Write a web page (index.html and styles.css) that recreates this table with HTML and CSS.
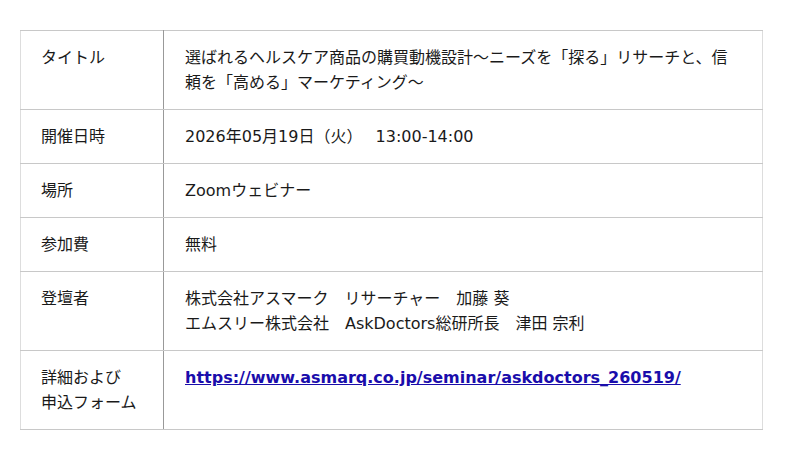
FILE: index.html
```html
<!DOCTYPE html>
<html lang="ja">
<head>
<meta charset="utf-8">
<link rel="stylesheet" href="styles.css">
</head>
<body>
<table class="info">
  <tr>
    <th>タイトル</th>
    <td>選ばれるヘルスケア商品の購買動機設計～ニーズを「探る」リサーチと、信頼を「高める」マーケティング～</td>
  </tr>
  <tr>
    <th>開催日時</th>
    <td>2026年05月19日（火）　 13:00-14:00</td>
  </tr>
  <tr>
    <th>場所</th>
    <td>Zoomウェビナー</td>
  </tr>
  <tr>
    <th>参加費</th>
    <td>無料</td>
  </tr>
  <tr>
    <th>登壇者</th>
    <td>株式会社アスマーク　リサーチャー　加藤 葵<br>エムスリー株式会社　AskDoctors総研所長　津田 宗利</td>
  </tr>
  <tr>
    <th>詳細および<br>申込フォーム</th>
    <td><a class="link" href="#">https://www.asmarq.co.jp/seminar/askdoctors_260519/</a></td>
  </tr>
</table>
</body>
</html>
```

FILE: styles.css
```css
html, body {
  margin: 0;
  padding: 0;
  background: #fff;
}
body {
  padding: 30px 38px 0 20px;
  font-family: "DejaVu Sans", "Noto Sans CJK JP", sans-serif;
  font-size: 16px;
  line-height: 25px;
  color: #1a1a1a;
}
.info {
  width: 743px;
  border-collapse: collapse;
  border: 1px solid #ddd;
}
.info th,
.info td {
  text-align: left;
  vertical-align: top;
  font-weight: normal;
  padding: 14px 20px 14px 20px;
  border-top: 1px solid #c8c8c8;
  border-bottom: 1px solid #c8c8c8;
}
.info th {
  width: 102px;
  border-right: 1px solid #999;
}
.info td {
  padding-left: 21px;
  padding-right: 30px;
}
.link {
  color: #1a0dab;
  font-weight: bold;
  text-decoration: underline;
}
```
